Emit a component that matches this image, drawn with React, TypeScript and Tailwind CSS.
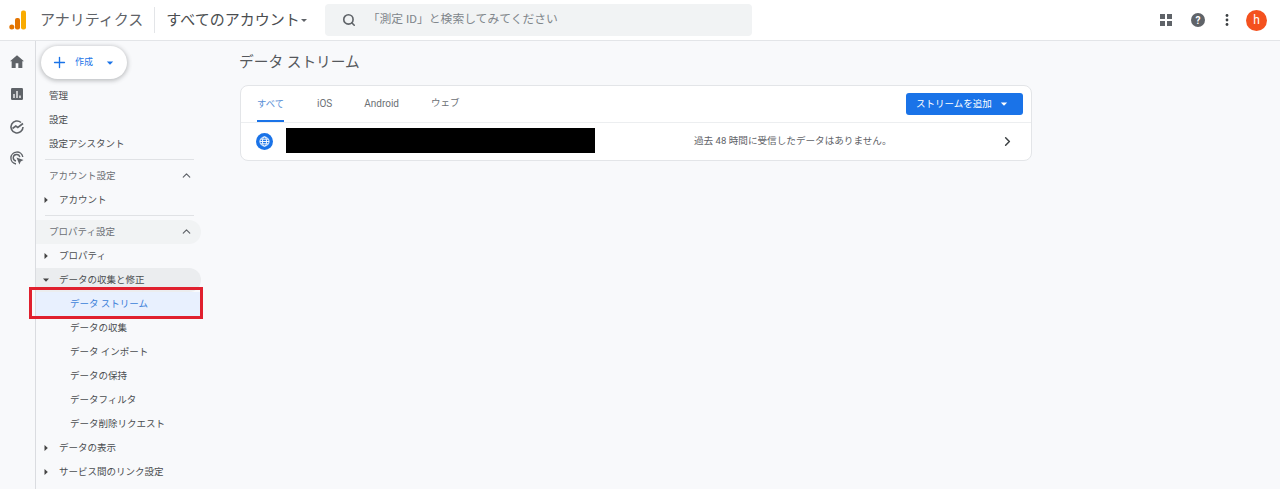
import React from 'react';
import { Plus, ChevronUp, ChevronRight, Search } from 'lucide-react';

const FONT = "font-['Roboto','Noto_Sans_CJK_JP',sans-serif]";

const Caret = ({ open = false }: { open?: boolean }) => (
  <svg width="8" height="8" viewBox="0 0 8 8" className="shrink-0">
    {open ? <path d="M1 2.5h6L4 5.8z" fill="#444" /> : <path d="M2.5 1v6L5.8 4z" fill="#444" />}
  </svg>
);

const TopRow = ({ label }: { label: string }) => (
  <div className="h-6 flex items-center pl-[13px] text-[9.5px] text-[#4a4d50]">{label}</div>
);

const TreeRow = ({ label, open = false, shaded = false }: { label: string; open?: boolean; shaded?: boolean }) => (
  <div className={`h-6 w-[165px] flex items-center pl-[6px] text-[9.5px] text-[#4a4d50] rounded-r-full ${shaded ? 'bg-[#ebedef]' : ''}`}>
    <Caret open={open} />
    <span className="ml-[9px]">{label}</span>
  </div>
);

const SubRow = ({ label, active = false }: { label: string; active?: boolean }) => (
  <div className={`h-6 w-[165px] flex items-center pl-[34px] text-[9.5px] ${active ? 'bg-[#e8f0fe] text-[#3b7fd9]' : 'text-[#4a4d50]'}`}>{label}</div>
);

const SectionHead = ({ label, shaded = false }: { label: string; shaded?: boolean }) => (
  <div className={`h-6 w-[165px] flex items-center justify-between pl-[13px] pr-[8px] text-[9.5px] text-[#6b6f74] rounded-r-full ${shaded ? 'bg-[#f1f3f4]' : ''}`}>
    <span>{label}</span>
    <ChevronUp size={13} strokeWidth={2.2} color="#5f6368" className="mt-[-1px]" />
  </div>
);

const Rail = () => (
  <div className="w-9 shrink-0 border-r border-[#dadce0] flex flex-col items-center pt-[13px] gap-[16px] pr-[1px]">
    <svg width="16" height="16" viewBox="0 0 24 24" fill="#5f6368">
      <path d="M10 21v-7h4v7h6V11h2.5L12 2 1.5 11H4v10z" />
    </svg>
    <svg width="16" height="16" viewBox="0 0 16 16">
      <rect x="2" y="2" width="12" height="12" rx="1.2" fill="#5f6368" />
      <path d="M5 8v4M8 5v7M11 9.5V12" stroke="#fff" strokeWidth="1.3" />
    </svg>
    <svg width="16" height="16" viewBox="0 0 16 16" fill="none" stroke="#5f6368" strokeWidth="1.6" className="mt-[1px]">
      <path d="M14 8a6 6 0 1 1-2-4.5" />
      <path d="M3.5 9.5 6.8 7l2 1.5L14 4.5" />
    </svg>
    <svg width="16" height="16" viewBox="0 0 16 16" fill="none" stroke="#5f6368" strokeWidth="1.4" className="mt-[-1px]">
      <path d="M13.8 7A6 6 0 1 0 7 14" />
      <path d="M10.8 7.2A3.3 3.3 0 1 0 7 11" />
      <path d="M7.5 7.5l7 2.6-2.8 1.3L10.4 14.5z" fill="#5f6368" stroke="none" />
    </svg>
  </div>
);

const Sidebar = () => (
  <div className="w-[204px] shrink-0 relative">
    <div className="h-[43px] pt-[5px] pl-[5px]">
      <div className="w-[86px] h-[33px] bg-white rounded-full shadow-[0_1px_4px_1px_rgba(60,64,67,0.3)] flex items-center pl-[10px] text-[#1a73e8]">
        <Plus size={17} strokeWidth={1.9} />
        <span className="ml-[7px] text-[9px]">作成</span>
        <svg width="8" height="8" viewBox="0 0 8 8" className="ml-[13px]"><path d="M.8 2.5h6.4L4 5.8z" fill="#1a73e8" /></svg>
      </div>
    </div>
    <TopRow label="管理" />
    <TopRow label="設定" />
    <TopRow label="設定アシスタント" />
    <div className="mt-[3px] mb-[4px] ml-[9px] w-[149px] border-t border-[#e0e2e5]" />
    <SectionHead label="アカウント設定" />
    <TreeRow label="アカウント" />
    <div className="mt-[3px] mb-[4px] ml-[9px] w-[149px] border-t border-[#e0e2e5]" />
    <SectionHead label="プロパティ設定" shaded />
    <TreeRow label="プロパティ" />
    <TreeRow label="データの収集と修正" open shaded />
    <SubRow label="データ ストリーム" active />
    <SubRow label="データの収集" />
    <SubRow label="データ インポート" />
    <SubRow label="データの保持" />
    <SubRow label="データフィルタ" />
    <SubRow label="データ削除リクエスト" />
    <TreeRow label="データの表示" />
    <TreeRow label="サービス間のリンク設定" />
    {/* annotation box from the screenshot */}
    <div className="absolute left-[-7px] top-[246px] w-[174px] h-[32px] border-[3px] border-[#e0202e]" />
  </div>
);

const Header = () => (
  <div className="h-[41px] shrink-0 bg-white border-b border-[#e3e5e8] flex items-center">
    <svg width="18" height="20" viewBox="0 0 18 20" className="ml-[9px]">
      <rect x="12" y="0.5" width="5" height="19" rx="2" fill="#f9ab00" />
      <rect x="6" y="8" width="5" height="11.5" rx="2" fill="#e37400" />
      <circle cx="2.8" cy="17" r="2.5" fill="#e37400" />
    </svg>
    <span className="ml-[13px] text-[15px] text-[#5f6368]">アナリティクス</span>
    <div className="ml-[11px] h-[26px] border-l border-[#e3e5e8]" />
    <span className="ml-[11px] text-[15px] text-[#4a4d50]">すべてのアカウント</span>
    <svg width="8" height="8" viewBox="0 0 8 8"><path d="M1 3h6L4 6z" fill="#5f6368" /></svg>
    <div className="ml-[17px] w-[427px] h-[32px] bg-[#f1f3f4] rounded-[4px] flex items-center pl-[17px]">
      <Search size={14} strokeWidth={2.8} color="#5f6368" />
      <span className="ml-[12px] text-[11.8px] text-[#80868b]">「測定 ID」と検索してみてください</span>
    </div>
    <div className="ml-auto flex items-center">
      <svg width="14" height="14" viewBox="0 0 14 14" fill="#5f6368">
        <rect x="1" y="1" width="5" height="5" /><rect x="8" y="1" width="5" height="5" />
        <rect x="1" y="8" width="5" height="5" /><rect x="8" y="8" width="5" height="5" />
      </svg>
      <div className="ml-[18px] w-[14px] h-[14px] rounded-full bg-[#5f6368] text-white text-[10px] font-bold flex items-center justify-center">?</div>
      <svg width="4" height="14" viewBox="0 0 4 14" fill="#3c4043" className="ml-[20px]">
        <circle cx="2" cy="2.5" r="1.4" /><circle cx="2" cy="7" r="1.4" /><circle cx="2" cy="11.5" r="1.4" />
      </svg>
      <div className="ml-[17px] mr-[13px] w-[21px] h-[21px] rounded-full bg-[#f4511e] text-white text-[12px] flex items-center justify-center">h</div>
    </div>
  </div>
);

const Card = () => (
  <div className="mt-[12px] w-[792px] h-[76px] bg-white border border-[#e3e5e8] rounded-[8px] flex flex-col">
    <div className="h-[37px] shrink-0 flex items-stretch border-b border-[#eceef0] pl-[16px] pr-[8px] text-[10px] text-[#6b6f74]">
      <div className="w-[27px] pt-[1px] flex items-center justify-center whitespace-nowrap text-[9.3px] text-[#5a8fd6] border-b-2 border-[#1a73e8]">すべて</div>
      <div className="ml-[33px] pb-[2px] flex items-center">iOS</div>
      <div className="ml-[32px] pb-[2px] flex items-center">Android</div>
      <div className="ml-[32px] pb-[2px] flex items-center text-[9.5px]">ウェブ</div>
      <div className="ml-auto self-start mt-[7px] w-[117px] h-[22px] bg-[#1a73e8] rounded-[3px] text-white flex items-center pl-[10px] text-[9.5px]">
        ストリームを追加
        <svg width="8" height="8" viewBox="0 0 8 8" className="ml-[8px]"><path d="M.8 2.5h6.4L4 5.8z" fill="#fff" /></svg>
      </div>
    </div>
    <div className="flex-1 flex items-center pl-[15px] text-[9.6px] text-[#5f6368]">
      <div className="w-[17px] h-[17px] rounded-full bg-[#1a73e8] flex items-center justify-center">
        <svg width="11" height="11" viewBox="0 0 12 12" fill="none" stroke="#fff" strokeWidth="1">
          <circle cx="6" cy="6" r="5" />
          <ellipse cx="6" cy="6" rx="2.2" ry="5" />
          <path d="M1 6h10M1.7 3.5h8.6M1.7 8.5h8.6" />
        </svg>
      </div>
      <div className="ml-[13px] mb-[3px] w-[309px] h-[25px] bg-black" />
      <span className="ml-[99px]">過去 48 時間に受信したデータはありません。</span>
      <ChevronRight size={15} strokeWidth={2.4} color="#3c4043" className="ml-auto mr-[16px]" />
    </div>
  </div>
);

export default function App() {
  return (
    <div className={`h-[489px] w-[1280px] overflow-hidden flex flex-col bg-[#f8f9fb] ${FONT}`}>
      <Header />
      <div className="flex-1 flex min-h-0">
        <Rail />
        <Sidebar />
        <main className="flex-1 pt-[10px]">
          <h1 className="-ml-px text-[14.7px] leading-[22px] text-[#55585c] font-normal">データ ストリーム</h1>
          <Card />
        </main>
      </div>
    </div>
  );
}
